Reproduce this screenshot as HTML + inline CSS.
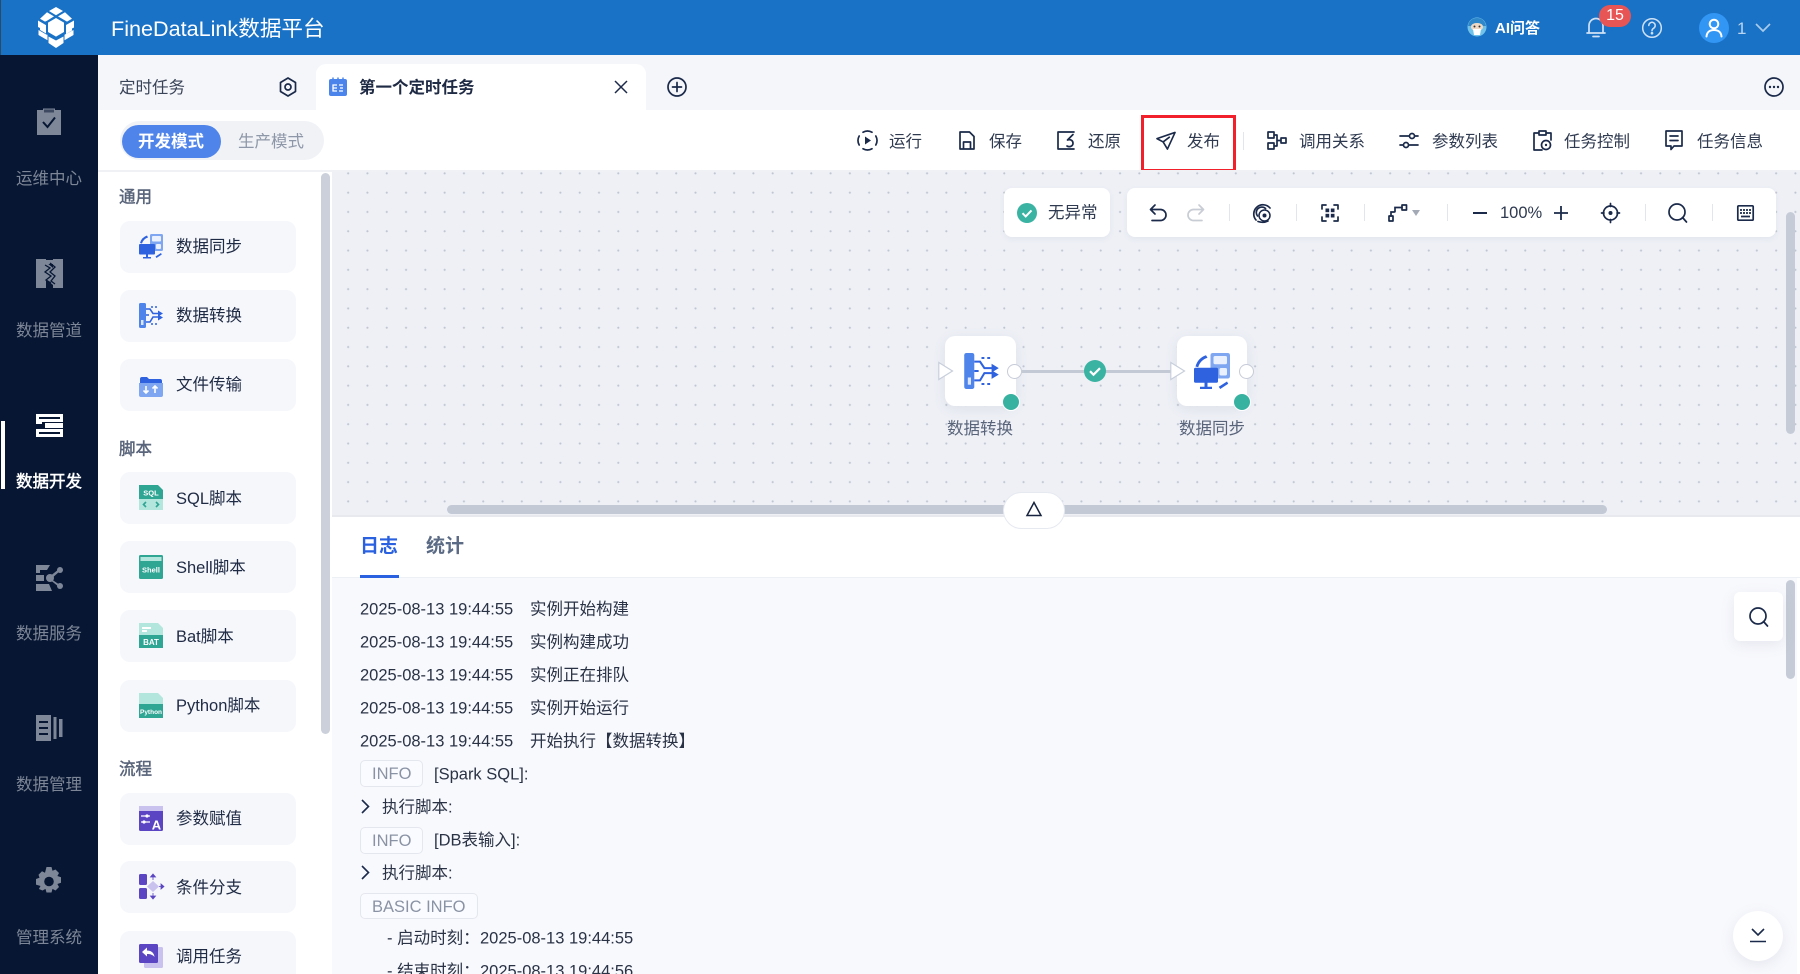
<!DOCTYPE html>
<html lang="zh"><head><meta charset="utf-8"><title>FineDataLink</title>
<style>
*{box-sizing:border-box}
html,body{margin:0;padding:0;width:1800px;height:974px;overflow:hidden;background:#fff}
body{position:relative;font-family:"Liberation Sans","Noto Sans CJK SC",sans-serif;font-size:16.5px;color:#2a3346}
.a{position:absolute}
.t{position:absolute;white-space:nowrap;line-height:24px;height:24px;transform:translateY(-11px)}
svg{position:absolute;overflow:visible}
.nav{color:#7d8696;width:98px;text-align:center;left:0}
.h{left:119px;color:#59647a;font-size:16.5px;-webkit-text-stroke:.45px #59647a;transform:translateY(-10.5px)}
.item{position:absolute;left:120px;width:176px;height:52px;border-radius:10px;background:#f5f7fb}
.il{left:176px;color:#1f2a44}
.tb{color:#2f3a50}
.sep{position:absolute;width:1px;background:#e2e5ec}
.s{fill:none;stroke:#1b2a4a;stroke-width:1.7;stroke-linecap:round;stroke-linejoin:round}
.tag{position:absolute;left:360px;height:27px;border:1px solid #e4e7ee;border-radius:5px;color:#8a93a5;line-height:27px;padding-left:11px;font-size:16.5px;background:#fafbfe}
.lg{color:#2a3346;transform:translateY(-11.5px)}
</style></head><body>

<!-- header -->
<div class="a" style="left:0;top:0;width:1800px;height:55px;background:#1a72c6"></div>
<div class="a" style="left:0;top:0;width:1px;height:55px;background:#2b4a66"></div>
<svg style="left:37px;top:7px" width="38" height="41" viewBox="0 0 38 41" fill="#fff">
<path d="M19 0l7 4-7 4.200L12 4z"/>
<path d="M10 5.200l7 4.200-7 4.300-2 .9L3 11.800z" />
<path d="M28 5.200l7 6.600-5 2.800-9-5.200z"/>
<path d="M1 13.500l8 4.600v8.400L3 23v-2L1 20z"/>
<path d="M37 13.500v7l-2 1v2l-6 3.500V18z"/>
<path d="M19 11l8 4.600v9.400l-8 4.600-8-4.600V15.600z"/>
<path d="M1.500 23l8 4.600 1 .2v5.500l-6.500-3.800-2.500-1.500z"/>
<path d="M36.500 23v5l-9 5.300v-5.500z"/>
<path d="M11.500 29.500l7.500 4 7.500-4v6.500L19 41l-7.500-5z"/>
</svg>
<div class="t" style="left:111px;top:28px;color:#fff;font-size:21.6px">FineDataLink数据平台</div>

<svg style="left:1467px;top:17px" width="20" height="20" viewBox="0 0 20 20">
<circle cx="10" cy="10" r="9.500" fill="#6fc2ea"/><path d="M1 9c1-6 5-8 9-8s8 2 9 8l-3 0c-1-2-3-3-6-3s-5 1-6 3z" fill="#2f88c9"/>
<ellipse cx="10" cy="10" rx="6" ry="4" fill="#f0d9c4"/><path d="M6 12h8l-1 6H7z" fill="#fff"/><circle cx="7.500" cy="9.500" r="1" fill="#333"/><circle cx="12.500" cy="9.500" r="1" fill="#333"/></svg>
<div class="t" style="left:1495px;top:28px;color:#fff;font-size:15px;font-weight:700">AI问答</div>
<svg style="left:1585px;top:16px" width="22" height="22" viewBox="0 0 22 22" fill="none" stroke="#cfe2f5" stroke-width="1.700" stroke-linecap="round" stroke-linejoin="round"><path d="M2 17h18M4 17V9.500a7 7 0 0 1 14 0V17M8 20.500h6"/></svg>
<div class="a" style="left:1599px;top:5px;width:32px;height:22px;border-radius:11px;background:#e85555;color:#fff;font-size:16px;line-height:22px;text-align:center">15</div>
<svg style="left:1642px;top:18px" width="20" height="20" viewBox="0 0 20 20" fill="none" stroke="#cfe2f5" stroke-width="1.500" stroke-linecap="round"><circle cx="10" cy="10" r="9.300"/><path d="M6.800 7.500a3.200 3.200 0 1 1 4.800 2.800c-1 .6-1.600 1.100-1.600 2.400"/><circle cx="10" cy="15.200" r=".6" fill="#cfe2f5"/></svg>
<div class="a" style="left:1699px;top:13px;width:30px;height:30px;border-radius:50%;background:#3296f5"></div>
<svg style="left:1705px;top:18px" width="18" height="20" viewBox="0 0 18 20" fill="none" stroke="#fff" stroke-width="2" stroke-linecap="round"><circle cx="9" cy="6" r="4.300"/><path d="M1.500 18.500c.4-4.500 3.500-6.500 7.500-6.500s7.100 2 7.500 6.500"/></svg>
<div class="t" style="left:1737px;top:28px;color:#b9d5ef;font-size:17px">1</div>
<svg style="left:1755px;top:23px" width="16" height="9" viewBox="0 0 16 9" fill="none" stroke="#a9cbea" stroke-width="1.700"><path d="M1 1l7 7 7-7"/></svg>

<!-- sidebar -->
<div class="a" style="left:0;top:55px;width:98px;height:919px;background:#071633"></div>
<div class="a" style="left:1px;top:421px;width:4px;height:68px;background:#fff"></div>

<svg style="left:37px;top:108px" width="24" height="27" viewBox="0 0 24 27"><path d="M0 2h6v-1.500h12V2h6v25H0z" fill="#7e8798"/><rect x="7" y="1.500" width="10" height="3" fill="#071633" opacity=".55"/><path d="M6 14l4.500 5L18 9.500" fill="none" stroke="#071633" stroke-width="2"/></svg>
<div class="t nav" style="top:178px">运维中心</div>

<svg style="left:36px;top:259px" width="27" height="29" viewBox="0 0 27 29"><path d="M0 0h10v3l7 6V0h10v29H17v-3l-7-6v9H0z" fill="#7e8798"/><path d="M10 3h7M10 9l7 5-7 3 7 5" fill="none" stroke="#7e8798" stroke-width="4"/><path d="M9 6l5 3-5 4 6 4-5 4 5 3M14 4l5 4-5 5 5 4-4 5 4 3" fill="none" stroke="#071633" stroke-width="1.300"/></svg>
<div class="t nav" style="top:330px">数据管道</div>

<svg style="left:36px;top:414px" width="27" height="23" viewBox="0 0 27 23" fill="#fff"><path d="M0 0h27v8H6v2H0z"/><path d="M9 9h18v5H9z"/><path d="M0 15h27v8H0z"/><path d="M3 3h21v2H3zM3 18h21v2H3z" fill="#071633"/></svg>
<div class="t nav" style="top:481px;color:#fff;-webkit-text-stroke:.5px #fff">数据开发</div>

<svg style="left:36px;top:564px" width="27" height="28" viewBox="0 0 27 28" fill="#7e8798"><path d="M0 1h14l-3 5H4v3H0z"/><path d="M0 11h8v6H0z"/><path d="M0 20h13l3 7H0z"/><circle cx="14" cy="14" r="4"/><circle cx="24" cy="6" r="3"/><circle cx="24" cy="22" r="3"/><path d="M13 13l10-8 1 2-9 8 9 6-1 2-10-8z"/></svg>
<div class="t nav" style="top:633px">数据服务</div>

<svg style="left:36px;top:715px" width="27" height="26" viewBox="0 0 27 26" fill="#7e8798"><path d="M0 0h15v26H0z"/><path d="M3 6h9v2H3zM3 12h9v2H3zM3 18h9v2H3z" fill="#071633"/><rect x="17.500" y="2" width="3" height="22"/><rect x="23" y="4" width="3.500" height="18"/></svg>
<div class="t nav" style="top:784px">数据管理</div>

<svg style="left:35px;top:867px" width="28" height="28" viewBox="0 0 28 28"><path d="M11.500 0h5l1 3.800 3-1.300 3.500 3.500-1.600 3 3.600 1.200v5.600l-3.600 1.200 1.600 3-3.500 3.500-3-1.600-1 3.600h-5l-1-3.600-3 1.600L3.900 22l1.600-3L1 17.600V12l3.500-1.200-1-3 3.500-3.500 3 1.500z" fill="#7e8798"/><circle cx="14" cy="14.500" r="4.800" fill="#071633"/></svg>
<div class="t nav" style="top:937px">管理系统</div>

<!-- tab bar -->
<div class="a" style="left:98px;top:55px;width:1702px;height:55px;background:#f5f6fa"></div>
<div class="t" style="left:119px;top:87px;color:#3a4458">定时任务</div>
<svg style="left:278px;top:77px" width="20" height="20" viewBox="0 0 20 20"><path class="s" d="M10 1l7.500 4.500v9L10 19l-7.500-4.500v-9z"/><circle class="s" cx="10" cy="10" r="3"/></svg>
<div class="a" style="left:316px;top:64px;width:330px;height:46px;background:#fff;border-radius:10px 10px 0 0"></div>
<svg style="left:329px;top:77px" width="18" height="19" viewBox="0 0 18 19"><rect y="2" width="18" height="17" rx="2" fill="#4b85ec"/><path d="M4 .5v3M9 .5v3M14 .5v3" stroke="#4b85ec" stroke-width="1.500"/><path d="M8 8H4v6h4M4 11h4M10 8h4M10 14h4M11 11h3" stroke="#fff" stroke-width="1.300" fill="none"/></svg>
<div class="t" style="left:359px;top:87px;color:#1f2a44;font-weight:700">第一个定时任务</div>
<svg style="left:614px;top:80px" width="14" height="14" viewBox="0 0 14 14" fill="none" stroke="#1b2a4a" stroke-width="1.500"><path d="M1 1l12 12M13 1L1 13"/></svg>
<svg style="left:667px;top:77px" width="20" height="20" viewBox="0 0 20 20"><circle class="s" cx="10" cy="10" r="9"/><path class="s" d="M10 5.500v9M5.500 10h9"/></svg>
<svg style="left:1764px;top:77px" width="20" height="20" viewBox="0 0 20 20"><circle class="s" cx="10" cy="10" r="9"/><circle cx="6" cy="10" r="1.200" fill="#1b2a4a"/><circle cx="10" cy="10" r="1.200" fill="#1b2a4a"/><circle cx="14" cy="10" r="1.200" fill="#1b2a4a"/></svg>

<!-- mode toggle -->
<div class="a" style="left:120px;top:121px;width:204px;height:39px;border-radius:20px;background:#f0f2f6"></div>
<div class="a" style="left:122px;top:125px;width:99px;height:33px;border-radius:17px;background:#4f84ea"></div>
<div class="t" style="left:138px;top:141px;color:#fff;font-weight:700">开发模式</div>
<div class="t" style="left:238px;top:141px;color:#8e97a8">生产模式</div>

<!-- toolbar -->
<svg style="left:857px;top:130px" width="21" height="21" viewBox="0 0 21 21"><path class="s" d="M6 2.200a9.300 9.300 0 0 1 9 0M18.800 6a9.300 9.300 0 0 1 0 9M15 18.800a9.300 9.300 0 0 1-9 0M2.200 15a9.300 9.300 0 0 1 0-9"/><path d="M8 6.500l6 4-6 4z" fill="#1b2a4a"/></svg>
<div class="t tb" style="left:889px;top:141px">运行</div>
<svg style="left:959px;top:131px" width="16" height="19" viewBox="0 0 16 19"><path class="s" d="M1 1h9.500L15 5.500V18H1zM4.500 18v-7h7v7"/></svg>
<div class="t tb" style="left:989px;top:141px">保存</div>
<svg style="left:1057px;top:131px" width="18" height="19" viewBox="0 0 18 19"><path class="s" d="M17 1H1v17h16M16 3.500L10.500 9c2.500-1 5.500.2 5.500 3.200 0 3-3.700 4.300-6 2.800"/></svg>
<div class="t tb" style="left:1088px;top:141px">还原</div>
<svg style="left:1156px;top:131px" width="20" height="20" viewBox="0 0 21 20"><path class="s" d="M20 1L1 7.500l6.500 3.500L12 18.500zM7.500 11L14 6"/></svg>
<div class="t tb" style="left:1187px;top:141px">发布</div>
<div class="a" style="left:1141px;top:115px;width:95px;height:57px;border:3.500px solid #f1202b"></div>
<div class="sep" style="left:1243px;top:132px;height:18px"></div>
<svg style="left:1267px;top:131px" width="20" height="19" viewBox="0 0 20 19"><path class="s" d="M1 1h6v6H1zM1 12h6v6H1zM14 7h5v5h-5zM7 4h3v11H7M10 9.500h4"/></svg>
<div class="t tb" style="left:1299px;top:141px">调用关系</div>
<svg style="left:1399px;top:132px" width="20" height="17" viewBox="0 0 20 17"><path class="s" d="M1 4h9M16 4h3M1 13h3M10 13h9"/><circle class="s" cx="13" cy="4" r="2.500"/><circle class="s" cx="7" cy="13" r="2.500"/></svg>
<div class="t tb" style="left:1432px;top:141px">参数列表</div>
<svg style="left:1533px;top:130px" width="19" height="21" viewBox="0 0 19 21"><path class="s" d="M5 3H1v17h8M14 3h4v7M6 1h7v4H6z"/><circle class="s" cx="13" cy="15" r="4.500"/><circle cx="13" cy="15" r="1.200" fill="#1b2a4a"/></svg>
<div class="t tb" style="left:1564px;top:141px">任务控制</div>
<svg style="left:1665px;top:130px" width="18" height="21" viewBox="0 0 18 21"><path class="s" d="M1 1h16v15H9l-3 3.500V16H1zM5 6h8M5 10.500h8"/></svg>
<div class="t tb" style="left:1697px;top:141px">任务信息</div>

<div class="a" style="left:98px;top:170px;width:1702px;height:2px;background:#f0f1f5"></div>

<!-- left panel scrollbar -->
<div class="a" style="left:321px;top:173px;width:9px;height:561px;border-radius:5px;background:#cbd0da"></div>

<!-- left panel items -->
<div class="t h" style="top:196px">通用</div>
<div class="item" style="top:221px"></div>
<svg style="left:139px;top:234px" width="24" height="26" viewBox="0 0 24 26" fill="#2f62df"><path d="M8 1.500A11 11 0 0 0 1 9l2 .5A9 9 0 0 1 9 3.500z"/><rect x="11" y="0" width="13" height="17" rx="1.500" fill="#7fa6f1"/><rect x="13" y="2" width="9" height="5.500" rx="1" fill="#eaf0fd"/><rect x="17" y="10" width="5" height="5" rx="1" fill="#eaf0fd"/><rect x="0" y="10" width="16" height="10.500" rx="1"/><path d="M7 20h2v3H7zM4 23h8v1.500H4zM16.500 22.500l5.500-3.500.8 1.500-5.300 3.500z"/></svg>
<div class="t il" style="top:246px">数据同步</div>

<div class="item" style="top:290px"></div>
<svg style="left:139px;top:303px" width="24" height="25" viewBox="0 0 24 25"><rect x="0" y="0" width="7" height="25" rx="1.500" fill="#4f84ea"/><rect x="2" y="17" width="2.500" height="5" fill="#dbe6fb"/><g fill="none" stroke="#2f62df" stroke-width="1.600"><path d="M7 6h4l3 4.500h7M7 19h4l3-5h7M7 12h3"/></g><path d="M24 10.500l-5-3v6zM24 14.500l-5-3v6z" fill="#2f62df"/><path d="M12 4h2M16 4h2M12 21h2M16 21h2" stroke="#2f62df" stroke-width="1.500"/></svg>
<div class="t il" style="top:315px">数据转换</div>

<div class="item" style="top:359px"></div>
<svg style="left:139px;top:373px" width="24" height="24" viewBox="0 0 24 24"><path d="M1 6a2 2 0 0 1 2-2h5l2 2h11a2 2 0 0 1 2 2v3H1z" fill="#2f62df"/><path d="M0 10h24v12a2 2 0 0 1-2 2H2a2 2 0 0 1-2-2z" fill="#7fa6f1"/><path d="M7 13v7M4.500 17.500L7 20l2.500-2.500M16 20v-7M13.500 15.500L16 13l2.500 2.500" fill="none" stroke="#fff" stroke-width="1.600"/></svg>
<div class="t il" style="top:384px">文件传输</div>

<div class="t h" style="top:448px">脚本</div>
<div class="item" style="top:472px"></div>
<svg style="left:139px;top:485px" width="24" height="25" viewBox="0 0 24 25"><path d="M0 0h19l5 5v9H0z" fill="#2fa594"/><rect y="14" width="24" height="11" fill="#b3e6dc"/><text x="12" y="10.500" font-size="7.500" font-weight="700" fill="#fff" text-anchor="middle" font-family="Liberation Sans">SQL</text><path d="M7 17l-2.500 2.500L7 22M17 17l2.500 2.500L17 22" fill="none" stroke="#2fa594" stroke-width="1.600"/></svg>
<div class="t il" style="top:498px">SQL脚本</div>

<div class="item" style="top:541px"></div>
<svg style="left:139px;top:555px" width="24" height="24" viewBox="0 0 24 24"><rect width="24" height="24" rx="1.500" fill="#2fa594"/><rect x="1.500" y="2" width="21" height="4" fill="#b3e6dc"/><text x="12" y="17.500" font-size="7.500" font-weight="700" fill="#fff" text-anchor="middle" font-family="Liberation Sans">Shell</text></svg>
<div class="t il" style="top:567px">Shell脚本</div>

<div class="item" style="top:610px"></div>
<svg style="left:139px;top:623px" width="24" height="25" viewBox="0 0 24 25"><path d="M0 0h19l5 5v8H0z" fill="#b3e6dc"/><rect y="12" width="24" height="13" fill="#2fa594"/><path d="M3 4h9v2H3zM3 7h5v2H3z" fill="#fff"/><text x="12" y="22" font-size="8" font-weight="700" fill="#fff" text-anchor="middle" font-family="Liberation Sans">BAT</text></svg>
<div class="t il" style="top:636px">Bat脚本</div>

<div class="item" style="top:680px"></div>
<svg style="left:139px;top:693px" width="24" height="25" viewBox="0 0 24 25"><path d="M0 0h19l5 5v8H0z" fill="#b3e6dc"/><rect y="11" width="24" height="14" fill="#2fa594"/><text x="12" y="21" font-size="6.500" font-weight="700" fill="#fff" text-anchor="middle" font-family="Liberation Sans">Python</text></svg>
<div class="t il" style="top:705px">Python脚本</div>

<div class="t h" style="top:768px">流程</div>
<div class="item" style="top:793px"></div>
<svg style="left:139px;top:806px" width="24" height="25" viewBox="0 0 24 25"><rect width="24" height="25" rx="1.500" fill="#5b45c2"/><rect width="24" height="5" fill="#c9c1ee"/><path d="M2 10h9M2 16h9" stroke="#fff" stroke-width="1.300"/><circle cx="8" cy="10" r="1.600" fill="#fff"/><circle cx="5" cy="16" r="1.600" fill="#fff"/><text x="17.500" y="23.500" font-size="13" font-weight="700" fill="#fff" text-anchor="middle" font-family="Liberation Sans">A</text></svg>
<div class="t il" style="top:818px">参数赋值</div>

<div class="item" style="top:861px"></div>
<svg style="left:139px;top:874px" width="25" height="25" viewBox="0 0 25 25"><rect width="8" height="11" rx="1.500" fill="#5b45c2"/><rect y="14" width="8" height="11" rx="1.500" fill="#5b45c2"/><path d="M14 7l6 5.500-6 5.500-6-5.500z" fill="#c9c1ee"/><path d="M14 0l2.500 3h-5zM14 25l-2.500-3h5zM25 12.500l-3-2.500v5zM14 3v3M14 19v3M20 12.500h2" fill="#5b45c2" stroke="#5b45c2" stroke-width=".8"/></svg>
<div class="t il" style="top:887px">条件分支</div>

<div class="item" style="top:931px;height:43px;border-radius:10px 10px 0 0"></div>
<svg style="left:139px;top:944px" width="24" height="24" viewBox="0 0 24 24"><rect x="5" y="3" width="19" height="21" rx="1.500" fill="#c9c1ee"/><rect width="19" height="19" rx="1.500" fill="#5b45c2"/><path d="M3 8l5-4.500v3c4 0 7 2 7.500 6.500C13.500 10.500 11 10 8 10v2.500z" fill="#fff"/></svg>
<div class="t il" style="top:956px">调用任务</div>

<!-- canvas -->
<div class="a" style="left:332px;top:172px;width:1468px;height:345px;background-color:#eef0f6;background-image:radial-gradient(circle,#c0c6d1 0.9px,transparent 1.2px);background-size:19.3px 19.3px;background-position:6.5px -8.3px"></div>
<div class="a" style="left:1786px;top:212px;width:9px;height:222px;border-radius:5px;background:#c6ccd7"></div>

<!-- status chip -->
<div class="a" style="left:1004px;top:188px;width:106px;height:49px;background:#fff;border-radius:8px;box-shadow:0 2px 6px rgba(100,110,140,.08)"></div>
<svg style="left:1017px;top:203px" width="20" height="20" viewBox="0 0 20 20"><circle cx="10" cy="10" r="10" fill="#3ab3a2"/><path d="M5.500 10.200l3.200 3.200 5.800-6" fill="none" stroke="#fff" stroke-width="2"/></svg>
<div class="t" style="left:1048px;top:212px;color:#2f3a50">无异常</div>

<!-- canvas toolbar -->
<div class="a" style="left:1127px;top:188px;width:649px;height:49px;background:#fff;border-radius:8px;box-shadow:0 2px 6px rgba(100,110,140,.08)"></div>
<svg style="left:1149px;top:204px" width="18" height="18" viewBox="0 0 18 18"><path class="s" d="M6 1L1.500 5.500 6 10M2 5.500h9.500a5 5 0 0 1 0 11H3"/></svg>
<svg style="left:1187px;top:204px" width="18" height="18" viewBox="0 0 18 18"><path class="s" style="stroke:#c8ccd4" d="M12 1l4.500 4.500L12 10M16 5.500H6.500a5 5 0 0 0 0 11H15"/></svg>
<div class="sep" style="left:1229px;top:204px;height:17px"></div>
<svg style="left:1253px;top:203px" width="19" height="20" viewBox="0 0 19 20"><path class="s" d="M3 17A9 9 0 1 1 17 5M4.500 13a5.500 5.500 0 0 1 8-7.500"/><circle cx="11.500" cy="12.500" r="5.500" fill="none" stroke="#1b2a4a" stroke-width="1.500"/><circle cx="11.500" cy="12.500" r="2" fill="#1b2a4a"/><path class="s" d="M5 18.500c3 1 7 1 10-.5"/></svg>
<div class="sep" style="left:1296px;top:204px;height:17px"></div>
<svg style="left:1321px;top:204px" width="18" height="18" viewBox="0 0 18 18"><path class="s" d="M1 5V1h4M13 1h4v4M17 13v4h-4M5 17H1v-4"/><rect x="4.500" y="4.500" width="3.700" height="3.700" fill="#1b2a4a"/><rect x="9.800" y="4.500" width="3.700" height="3.700" fill="#1b2a4a"/><rect x="4.500" y="9.800" width="3.700" height="3.700" fill="#1b2a4a"/><rect x="9.800" y="9.800" width="3.700" height="3.700" fill="#1b2a4a"/></svg>
<div class="sep" style="left:1364px;top:204px;height:17px"></div>
<svg style="left:1388px;top:204px" width="20" height="18" viewBox="0 0 20 18"><rect class="s" x="1" y="12" width="4" height="5"/><rect class="s" x="14" y="1" width="4.500" height="5"/><path class="s" d="M3 12V8h3c1 0 1-.5 1-.5V3.500h7" style="stroke-linejoin:miter"/></svg>
<svg style="left:1412px;top:210px" width="8" height="6" viewBox="0 0 8 6"><path d="M0 0h8L4 6z" fill="#a3aab6"/></svg>
<div class="sep" style="left:1447px;top:204px;height:17px"></div>
<div class="a" style="left:1473px;top:212px;width:14px;height:2px;background:#1b2a4a"></div>
<div class="t" style="left:1500px;top:212px;color:#2f3a50;font-size:16.500px">100%</div>
<svg style="left:1554px;top:206px" width="14" height="14" viewBox="0 0 14 14"><path d="M7 0v14M0 7h14" stroke="#1b2a4a" stroke-width="1.800"/></svg>
<svg style="left:1601px;top:203px" width="19" height="20" viewBox="0 0 19 20"><circle class="s" cx="9.500" cy="10" r="7"/><circle cx="9.500" cy="10" r="2" fill="#1b2a4a"/><path class="s" d="M9.500 .5v3M9.500 16.500v3M.5 10h2.500M16 10h2.500"/></svg>
<div class="sep" style="left:1645px;top:204px;height:17px"></div>
<svg style="left:1668px;top:203px" width="20" height="20" viewBox="0 0 20 20"><circle class="s" cx="9" cy="9" r="8"/><path class="s" d="M14.500 14.500l4 4.500"/></svg>
<div class="sep" style="left:1712px;top:204px;height:17px"></div>
<svg style="left:1737px;top:205px" width="17" height="16" viewBox="0 0 17 16"><rect class="s" x=".8" y=".8" width="15.400" height="14.400" rx="1"/><path d="M3 5h2M6 5h2M9 5h2M12 5h2M3 8h2M6 8h2M9 8h2M12 8h2M4 11.500h9" stroke="#1b2a4a" stroke-width="1.700"/></svg>

<!-- nodes -->
<div class="a" style="left:945px;top:336px;width:71px;height:70px;background:#fff;border-radius:10px;box-shadow:0 3px 12px rgba(110,120,150,.12)"></div>
<div class="a" style="left:1177px;top:336px;width:70px;height:70px;background:#fff;border-radius:10px;box-shadow:0 3px 12px rgba(110,120,150,.12)"></div>
<div class="a" style="left:1022px;top:369.500px;width:150px;height:3px;background:#c3cad5"></div>
<svg style="left:938px;top:361px" width="16" height="20" viewBox="0 0 16 20"><path d="M.8 1.500L14.500 10 .8 18.500z" fill="#fff" stroke="#c8cfdb" stroke-width="1.200"/></svg>
<svg style="left:1170px;top:361px" width="16" height="20" viewBox="0 0 16 20"><path d="M.8 1.500L14.500 10 .8 18.500z" fill="#fff" stroke="#c8cfdb" stroke-width="1.200"/></svg>
<div class="a" style="left:1007px;top:364px;width:15px;height:15px;border-radius:50%;background:#fff;border:1px solid #c6cbd8"></div>
<div class="a" style="left:1239px;top:364px;width:15px;height:15px;border-radius:50%;background:#fff;border:1px solid #c6cbd8"></div>
<div class="a" style="left:1002px;top:393px;width:18px;height:18px;border-radius:50%;background:#38b2a0;border:1px solid #fff"></div>
<div class="a" style="left:1233px;top:393px;width:18px;height:18px;border-radius:50%;background:#38b2a0;border:1px solid #fff"></div>
<svg style="left:1084px;top:360px" width="22" height="22" viewBox="0 0 22 22"><circle cx="11" cy="11" r="11" fill="#3ab3a2"/><path d="M6 11.200l3.500 3.500 6.500-6.500" fill="none" stroke="#fff" stroke-width="2.200"/></svg>
<svg style="left:963px;top:353px" width="37" height="36" viewBox="0 0 24 25" ><rect x="0" y="0" width="7" height="25" rx="1.500" fill="#4f84ea"/><rect x="2.500" y="17" width="2.200" height="5" fill="#dbe6fb"/><g fill="none" stroke="#2f62df" stroke-width="1.400"><path d="M7 6h4l3 4.500h6M7 19h4l3-5h6M7 12.500h3"/></g><path d="M24 10.500l-5-3v6zM24 15l-5-3v6z" fill="#2f62df"/><path d="M12 3.500h2M16 3.500h2M12 21.500h2M16 21.500h2" stroke="#2f62df" stroke-width="1.400"/></svg>
<svg style="left:1194px;top:353px" width="36" height="36" viewBox="0 0 24 24" fill="#2f62df"><path d="M8 1.500A11 11 0 0 0 1 9l1.800.5A9 9 0 0 1 9 3.200z"/><rect x="11" y="0" width="13" height="17" rx="1.500" fill="#7fa6f1"/><rect x="13" y="2" width="9" height="5.500" rx="1" fill="#eaf0fd"/><rect x="17" y="10" width="5" height="5" rx="1" fill="#eaf0fd"/><rect x="0" y="9.800" width="16" height="10" rx="1"/><path d="M7 19.500h2v3H7zM4 22.500h8V24H4zM16.500 22.500l5.500-3.500.8 1.500-5.300 3.500z"/></svg>
<div class="t" style="left:945px;width:70px;text-align:center;top:428px;color:#59647a">数据转换</div>
<div class="t" style="left:1177px;width:70px;text-align:center;top:428px;color:#59647a">数据同步</div>

<!-- log panel -->
<div class="a" style="left:332px;top:517px;width:1468px;height:60px;background:#fff"></div>
<div class="a" style="left:332px;top:577px;width:1468px;height:1px;background:#edf0f4"></div>
<div class="a" style="left:332px;top:578px;width:1465px;height:396px;background:#f8f9fd"></div>
<div class="a" style="left:332px;top:515px;width:1468px;height:2px;background:#e7e9ef"></div>
<div class="a" style="left:447px;top:505px;width:1160px;height:9px;border-radius:5px;background:#c3cad5"></div>
<div class="a" style="left:1003px;top:492px;width:62px;height:37px;border-radius:19px;background:#fff;border:1px solid #e6e9f0"></div>
<svg style="left:1026px;top:501px" width="16" height="16" viewBox="0 0 16 16"><path d="M8 1.500L15 14.500H1z" fill="none" stroke="#17233f" stroke-width="1.500" stroke-linejoin="miter"/></svg>

<div class="t" style="left:360px;top:546px;color:#2a61e0;font-weight:700;font-size:19px">日志</div>
<div class="t" style="left:426px;top:546px;color:#5b6a85;font-weight:700;font-size:19px">统计</div>
<div class="a" style="left:360px;top:575px;width:39px;height:3px;background:#2a61e0"></div>

<div class="t lg" style="left:360px;top:609px">2025-08-13 19:44:55</div><div class="t lg" style="left:530px;top:609px">实例开始构建</div>
<div class="t lg" style="left:360px;top:642px">2025-08-13 19:44:55</div><div class="t lg" style="left:530px;top:642px">实例构建成功</div>
<div class="t lg" style="left:360px;top:675px">2025-08-13 19:44:55</div><div class="t lg" style="left:530px;top:675px">实例正在排队</div>
<div class="t lg" style="left:360px;top:708px">2025-08-13 19:44:55</div><div class="t lg" style="left:530px;top:708px">实例开始运行</div>
<div class="t lg" style="left:360px;top:741px">2025-08-13 19:44:55</div><div class="t lg" style="left:530px;top:741px">开始执行【数据转换】</div>

<div class="tag" style="top:760px;width:63px">INFO</div>
<div class="t lg" style="left:434px;top:774px">[Spark SQL]:</div>
<svg style="left:361px;top:799px" width="9" height="15" viewBox="0 0 9 15"><path d="M1 1l6.500 6.500L1 14" fill="none" stroke="#1b2a4a" stroke-width="1.600"/></svg>
<div class="t lg" style="left:382px;top:807px">执行脚本:</div>
<div class="tag" style="top:827px;width:63px">INFO</div>
<div class="t lg" style="left:434px;top:840px">[DB表输入]:</div>
<svg style="left:361px;top:865px" width="9" height="15" viewBox="0 0 9 15"><path d="M1 1l6.500 6.500L1 14" fill="none" stroke="#1b2a4a" stroke-width="1.600"/></svg>
<div class="t lg" style="left:382px;top:873px">执行脚本:</div>
<div class="tag" style="top:893px;width:118px;height:26px;line-height:26px">BASIC INFO</div>
<div class="t lg" style="left:387px;top:938px">- 启动时刻：</div><div class="t lg" style="left:480px;top:938px">2025-08-13 19:44:55</div>
<div class="t lg" style="left:387px;top:971px">- 结束时刻：</div><div class="t lg" style="left:480px;top:971px">2025-08-13 19:44:56</div>

<!-- log right controls -->
<div class="a" style="left:1786px;top:580px;width:9px;height:99px;border-radius:5px;background:#c6ccd7"></div>
<div class="a" style="left:1734px;top:592px;width:49px;height:49px;border-radius:6px;background:#fff;box-shadow:0 4px 14px rgba(100,110,140,.12)"></div>
<svg style="left:1749px;top:607px" width="20" height="20" viewBox="0 0 20 20"><circle class="s" cx="9" cy="9" r="8"/><path class="s" d="M14.500 14.500l4 4.500"/></svg>
<div class="a" style="left:1733px;top:911px;width:50px;height:50px;border-radius:50%;background:#fff;box-shadow:0 4px 14px rgba(100,110,140,.12)"></div>
<svg style="left:1750px;top:928px" width="16" height="15" viewBox="0 0 16 15" fill="none" stroke="#1b2a4a" stroke-width="1.600"><path d="M2 1l6 6 6-6M0 13.500h16"/></svg>
</body></html>
